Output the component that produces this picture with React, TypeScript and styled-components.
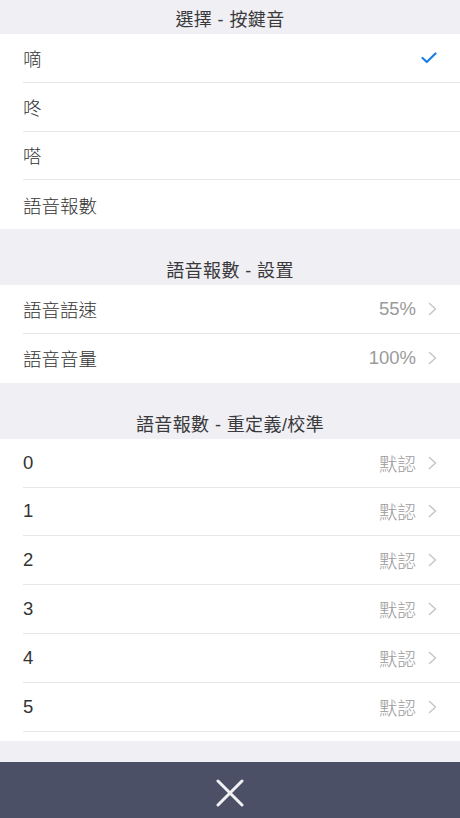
import styled, { createGlobalStyle } from 'styled-components';

const GlobalStyle = createGlobalStyle`
  html, body {
    margin: 0;
    padding: 0;
    height: 100%;
    background: #efeff4;
  }
  #root {
    height: 100%;
  }
`;

type Item = { label: string; value?: string; checked?: boolean; arrow?: boolean };

const keySounds: Item[] = [
  { label: '嘀', checked: true },
  { label: '咚' },
  { label: '嗒' },
  { label: '語音報數' },
];

const voiceSettings: Item[] = [
  { label: '語音語速', value: '55%', arrow: true },
  { label: '語音音量', value: '100%', arrow: true },
];

const digits: Item[] = ['0', '1', '2', '3', '4', '5'].map((d) => ({
  label: d,
  value: '默認',
  arrow: true,
}));

function Check() {
  return (
    <svg width="16" height="12" viewBox="0 0 16 12">
      <polyline
        points="1.5,6 5.8,10 14.5,1.5"
        fill="none"
        stroke="#1a7fe5"
        strokeWidth="2.2"
        strokeLinecap="round"
        strokeLinejoin="round"
      />
    </svg>
  );
}

function Chevron() {
  return (
    <svg width="9" height="14" viewBox="0 0 9 14">
      <polyline
        points="1.5,1.5 7.5,7 1.5,12.5"
        fill="none"
        stroke="#c7c7cc"
        strokeWidth="1.6"
        strokeLinecap="round"
        strokeLinejoin="round"
      />
    </svg>
  );
}

function Section({ title, items, first, tail }: { title: string; items: Item[]; first?: boolean; tail?: boolean }) {
  return (
    <>
      <Header first={first}>{title}</Header>
      <Group tail={tail}>
        {items.map((it, i) => (
          <Row key={it.label} divider={tail || i < items.length - 1}>
            <Label>{it.label}</Label>
            <Right>
              {it.value && <Value>{it.value}</Value>}
              {it.arrow && <Chevron />}
              {it.checked && <Check />}
            </Right>
          </Row>
        ))}
      </Group>
    </>
  );
}

function App() {
  return (
    <>
      <GlobalStyle />
      <Page>
        <List>
          <Section first title="選擇 - 按鍵音" items={keySounds} />
          <Section title="語音報數 - 設置" items={voiceSettings} />
          <Section tail title="語音報數 - 重定義/校準" items={digits} />
        </List>
        <BottomBar>
          <svg width="28" height="28" viewBox="0 0 28 28">
            <path d="M2 2 L26 26 M26 2 L2 26" stroke="#f2f2f5" strokeWidth="3" strokeLinecap="round" />
          </svg>
        </BottomBar>
      </Page>
    </>
  );
}

const Page = styled.div`
  height: 100%;
  display: flex;
  flex-direction: column;
  font-family: 'Liberation Sans', 'Noto Sans CJK TC', sans-serif;
  background: #efeff4;
`;

const List = styled.div`
  flex: 1;
  overflow: hidden;
`;

const Header = styled.div<{ first?: boolean }>`
  height: 34px;
  margin-top: ${({ first }) => (first ? '0' : '22px')};
  display: flex;
  align-items: center;
  justify-content: center;
  padding-top: 2px;
  box-sizing: border-box;
  font-size: 18px;
  color: #3a3a3c;
  letter-spacing: 0.4px;
`;

const Group = styled.div<{ tail?: boolean }>`
  background: #fff;
  padding-left: 23px;
  padding-bottom: ${({ tail }) => (tail ? '9px' : '0')};
`;

const Row = styled.div<{ divider?: boolean }>`
  height: 48.8px;
  box-sizing: border-box;
  display: flex;
  align-items: center;
  justify-content: space-between;
  padding-right: 23px;
  border-bottom: ${({ divider }) => (divider ? '1px solid #e6e6e8' : 'none')};
`;

const Label = styled.span`
  font-size: 18.5px;
  font-weight: 300;
  color: #333;
`;

const Right = styled.div`
  display: flex;
  align-items: center;
  gap: 12px;
`;

const Value = styled.span`
  font-size: 18.5px;
  font-weight: 300;
  color: #9a9a9a;
`;

const BottomBar = styled.div`
  height: 56px;
  flex-shrink: 0;
  background: #4b5066;
  display: flex;
  align-items: center;
  justify-content: center;
  padding-top: 6px;
  box-sizing: border-box;
`;

export default App;
